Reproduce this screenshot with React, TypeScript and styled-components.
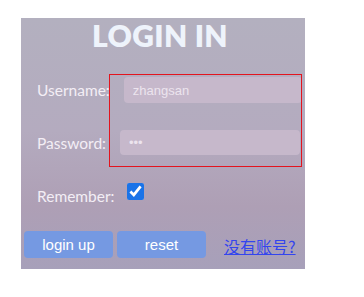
import React from "react";
import styled, { createGlobalStyle } from "styled-components";

const GlobalStyle = createGlobalStyle`
  html, body {
    margin: 0;
    padding: 0;
    background: #ffffff;
  }
`;

const Page = styled.div`
  padding: 18px 0 0 21px;
`;

const Panel = styled.div`
  position: relative;
  width: 284px;
  height: 251px;
  box-sizing: border-box;
  padding: 0 0 0 3px;
  background: linear-gradient(180deg, #b3b0bf 0%, #b4abbf 45%, #ae9fb5 75%, #a7a0ba 100%);
  font-family: Lato, "Noto Sans", sans-serif;
`;

const Title = styled.h1`
  margin: 0;
  height: 38px;
  text-align: center;
  font-family: Lato, sans-serif;
  font-weight: 800;
  font-size: 30px;
  line-height: 34px;
  color: #eef3fb;
  letter-spacing: 0.3px;
  padding-right: 9px;
`;

const Row = styled.div<{ gap: number }>`
  display: flex;
  align-items: center;
  padding-left: 13px;
  margin-top: ${(p) => p.gap}px;
`;

const Label = styled.label`
  font-size: 15.5px;
  color: #f3eef5;
  line-height: 20px;
`;

const Field = styled.input<{ w: number; h: number }>`
  margin-left: 14px;
  width: ${(p) => p.w}px;
  height: ${(p) => p.h}px;
  box-sizing: border-box;
  border: none;
  border-radius: 4px;
  outline: none;
  padding: 0 9px;
  background: #c6b8cb;
  color: #ece4ee;
  font-family: "Liberation Sans", Arial, sans-serif;
  font-size: 13px;
`;

const Check = styled.input`
  align-self: flex-start;
  margin: -3px 0 0 13px;
  width: 17px;
  height: 17px;
  accent-color: #1a73e8;
`;

const Marker = styled.div`
  position: absolute;
  left: 88px;
  top: 56px;
  width: 193px;
  height: 93px;
  box-sizing: border-box;
  border: 1px solid #e3141e;
  pointer-events: none;
`;

const Actions = styled.div`
  display: flex;
  align-items: center;
  gap: 4px;
  margin-top: 25px;
`;

const Button = styled.button`
  width: 89px;
  height: 27px;
  border: none;
  border-radius: 4px;
  background: #7599e2;
  color: #ffffff;
  font-family: "Liberation Sans", Arial, sans-serif;
  font-size: 15px;
  padding: 0;
`;

const Link = styled.a`
  margin-left: 14px;
  padding-top: 3px;
  color: #3345ee;
  font-family: "Noto Sans CJK SC", sans-serif;
  font-size: 16px;
  text-decoration: underline;
`;

export default function App() {
  return (
    <Page>
      <GlobalStyle />
      <Panel>
        <Title>LOGIN IN</Title>
        <Row gap={21}>
          <Label>Username:</Label>
          <Field w={178} h={26} defaultValue="zhangsan" />
        </Row>
        <Row gap={27}>
          <Label>Password:</Label>
          <Field w={180} h={25} type="password" defaultValue="123" />
        </Row>
        <Row gap={31}>
          <Label>Remember:</Label>
          <Check type="checkbox" defaultChecked />
        </Row>
        <Actions>
          <Button>login up</Button>
          <Button>reset</Button>
          <Link href="#">没有账号?</Link>
        </Actions>
        <Marker />
      </Panel>
    </Page>
  );
}
